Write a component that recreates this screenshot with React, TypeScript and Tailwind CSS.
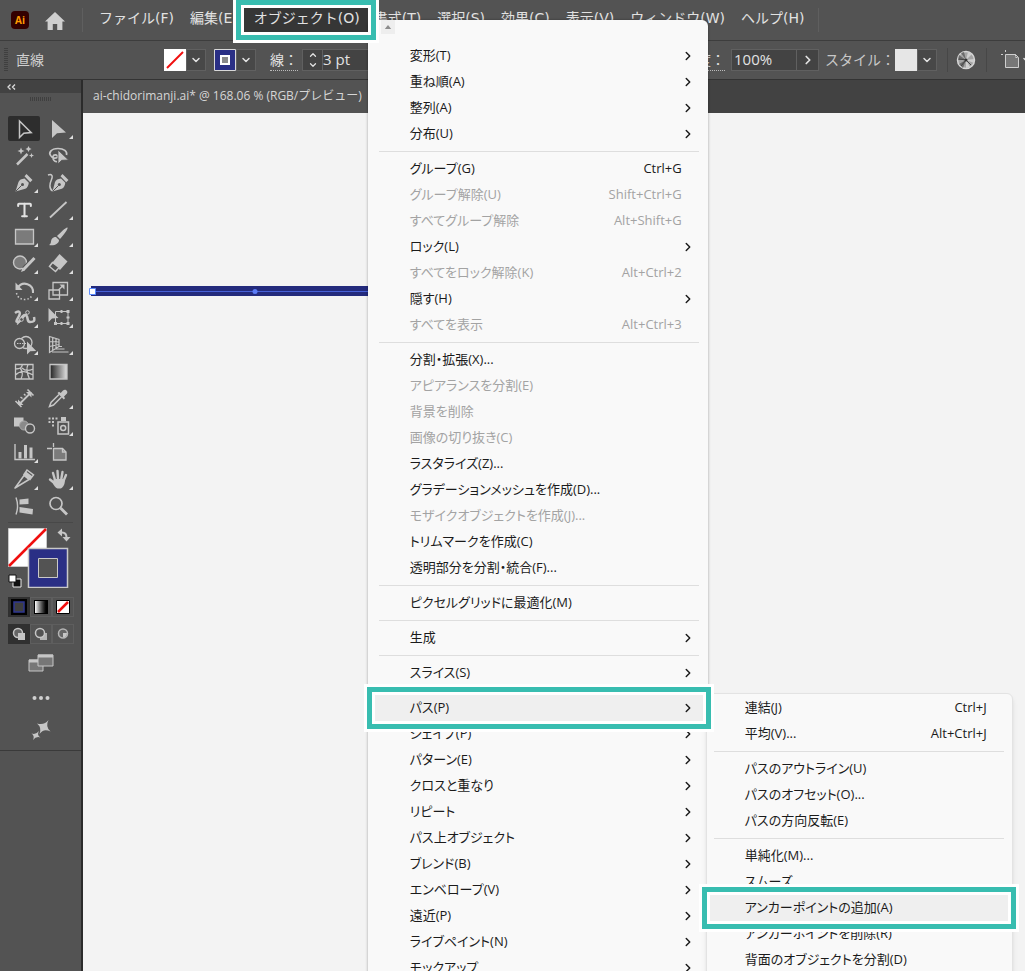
import { Fragment } from "react";
import type { ReactNode } from "react";
import { ChevronDown, ChevronRight, ChevronUp, Type } from "lucide-react";

type MenuEntry = {
  label: string;
  shortcut?: string;
  disabled?: boolean;
  more?: boolean;
  active?: boolean;
  children?: MenuEntry[][];
};

const pathMenu: MenuEntry[][] = [
  [
    { label: "連結(J)", shortcut: "Ctrl+J" },
    { label: "平均(V)...", shortcut: "Alt+Ctrl+J" },
  ],
  [
    { label: "パスのアウトライン(U)" },
    { label: "パスのオフセット(O)..." },
    { label: "パスの方向反転(E)" },
  ],
  [
    { label: "単純化(M)..." },
    { label: "スムーズ" },
    { label: "アンカーポイントの追加(A)", active: true },
    { label: "アンカーポイントを削除(R)" },
    { label: "背面のオブジェクトを分割(D)" },
  ],
];

const objectMenu: MenuEntry[][] = [
  [
    { label: "変形(T)", more: true },
    { label: "重ね順(A)", more: true },
    { label: "整列(A)", more: true },
    { label: "分布(U)", more: true },
  ],
  [
    { label: "グループ(G)", shortcut: "Ctrl+G" },
    { label: "グループ解除(U)", shortcut: "Shift+Ctrl+G", disabled: true },
    { label: "すべてグループ解除", shortcut: "Alt+Shift+G", disabled: true },
    { label: "ロック(L)", more: true },
    { label: "すべてをロック解除(K)", shortcut: "Alt+Ctrl+2", disabled: true },
    { label: "隠す(H)", more: true },
    { label: "すべてを表示", shortcut: "Alt+Ctrl+3", disabled: true },
  ],
  [
    { label: "分割・拡張(X)..." },
    { label: "アピアランスを分割(E)", disabled: true },
    { label: "背景を削除", disabled: true },
    { label: "画像の切り抜き(C)", disabled: true },
    { label: "ラスタライズ(Z)..." },
    { label: "グラデーションメッシュを作成(D)..." },
    { label: "モザイクオブジェクトを作成(J)...", disabled: true },
    { label: "トリムマークを作成(C)" },
    { label: "透明部分を分割・統合(F)..." },
  ],
  [{ label: "ピクセルグリッドに最適化(M)" }],
  [{ label: "生成", more: true }],
  [{ label: "スライス(S)", more: true }],
  [
    { label: "パス(P)", more: true, active: true, children: pathMenu },
    { label: "シェイプ(P)", more: true },
    { label: "パターン(E)", more: true },
    { label: "クロスと重なり", more: true },
    { label: "リピート", more: true },
    { label: "パス上オブジェクト", more: true },
    { label: "ブレンド(B)", more: true },
    { label: "エンベロープ(V)", more: true },
    { label: "遠近(P)", more: true },
    { label: "ライブペイント(N)", more: true },
    { label: "モックアップ", more: true },
  ],
];

function Highlight() {
  return (
    <span className="pointer-events-none absolute -inset-2 z-10 border-[5px] border-[#38bdb0] shadow-[0_0_0_3px_#fff,inset_0_0_0_3px_#fff]" />
  );
}

function MenuGroups({ groups }: { groups: MenuEntry[][] }) {
  return (
    <>
      {groups.map((group, i) => (
        <Fragment key={i}>
          {i > 0 && <hr className="mx-1 my-1 border-[#dedede]" />}
          {group.map((entry) => (
            <MenuRow key={entry.label} entry={entry} />
          ))}
        </Fragment>
      ))}
    </>
  );
}

function MenuRow({ entry }: { entry: MenuEntry }) {
  return (
    <div className={entry.active ? "relative z-10" : ""}>
      <button
        type="button"
        role="menuitem"
        disabled={entry.disabled}
        className={`flex h-[26px] w-full items-center pr-2 pl-[35px] text-left text-[13px] whitespace-nowrap ${entry.active ? "bg-[#efefef]" : ""} ${entry.disabled ? "text-[#a3a3a3]" : "text-[#1b1b1b]"}`}
      >
        <span className="flex-1 [font-feature-settings:'palt']">{entry.label}</span>
        {entry.shortcut && <span>{entry.shortcut}</span>}
        <span className="flex w-[13px] justify-center">
          {entry.more && <ChevronRight className="h-3.5 w-3.5 shrink-0" strokeWidth={2.5} />}
        </span>
      </button>
      {entry.children && (
        <div
          role="menu"
          className="absolute -top-0.5 left-[331px] w-[307px] rounded-md border border-[#e3e3e3] bg-[#f9f9f9] pt-px pr-1 pb-2 pl-[3px] shadow-md"
        >
          <MenuGroups groups={entry.children} />
        </div>
      )}
      {entry.active && <Highlight />}
    </div>
  );
}

function ObjectMenu() {
  return (
    <div
      role="menu"
      className="absolute top-3 left-full z-10 w-[340px] rounded-t-md bg-[#f9f9f9] pr-[5px] pb-2 pl-[7px] shadow-[0_0_3px_rgba(0,0,0,0.35)]"
    >
      <div className="mb-[9px] flex pl-1.5">
        <button type="button" aria-label="上へスクロール" className="flex h-3.5 w-3.5 items-center justify-center bg-[#eeeeee]">
          <svg viewBox="0 0 8 5" className="h-1 w-2 fill-[#8c8c8c]"><path d="M0 5 4 0l4 5z" /></svg>
        </button>
      </div>
      <MenuGroups groups={objectMenu} />
    </div>
  );
}

const menuNames = ["ファイル(F)", "編集(E)", "オブジェクト(O)", "書式(T)", "選択(S)", "効果(C)", "表示(V)", "ウィンドウ(W)", "ヘルプ(H)"];

function MenuBar() {
  return (
    <header className="relative z-20 flex items-start border-b border-[#3d3d3d] py-2">
      <div className="mt-[3px] ml-[11px] flex h-[18px] w-[18px] items-center justify-center rounded-[4px] bg-[#330000] text-[10px] font-bold text-[#ff9a00]">
        Ai
      </div>
      <button type="button" aria-label="ホーム" className="mt-1 ml-4">
        <svg viewBox="0 0 20 18" className="h-[18px] w-5 fill-[#cfcfcf]">
          <path d="M10 0 20 9.500h-2.600V18h-5.200v-6H7.800v6H2.600V9.500H0z" />
        </svg>
      </button>
      <span className="ml-[17px] h-6 w-px bg-[#5f5f5f]" />
      <nav className="ml-2 flex">
        {menuNames.map((name) =>
          name === "オブジェクト(O)" ? (
            <div key={name} className="relative z-10 -mx-0.5">
              <button type="button" className="block h-6 bg-[#363636] pr-2 pb-1 pl-2.5 font-['DejaVu_Sans','Noto_Sans_CJK_JP',sans-serif] text-sm leading-5 whitespace-nowrap">
                {name}
              </button>
              <ObjectMenu />
              <Highlight />
            </div>
          ) : (
            <button key={name} type="button" className="h-6 px-2 pb-1 font-['DejaVu_Sans','Noto_Sans_CJK_JP',sans-serif] text-sm leading-5 whitespace-nowrap">
              {name}
            </button>
          ),
        )}
      </nav>
      <span className="ml-1.5 h-6 w-px bg-[#5f5f5f]" />
    </header>
  );
}

function DropButton({ label }: { label: string }) {
  return (
    <button type="button" aria-label={label} className="flex h-[22px] w-5 items-center justify-center border border-[#606060] bg-[#484848]">
      <ChevronDown className="h-3 w-3" strokeWidth={3} />
    </button>
  );
}

function ControlBar() {
  return (
    <div className="flex h-[39px] items-center overflow-hidden border-b border-[#333] text-sm whitespace-nowrap">
      <span className="ml-1 h-6 w-1 shrink-0 bg-[repeating-linear-gradient(#3f3f3f_0_1px,transparent_1px_2px)]" />
      <span className="ml-2 w-[138px] shrink-0 text-[#d0d0d0]">直線</span>
      <div className="ml-2.5 flex shrink-0">
        <button type="button" aria-label="塗り">
          <svg viewBox="0 0 22 22" className="h-[22px] w-[22px]">
            <path d="M0 0h22v22H0z" fill="#fff" />
            <path d="M3 19 19 3" stroke="#f00f0f" strokeWidth="2" />
          </svg>
        </button>
        <DropButton label="塗りを選択" />
      </div>
      <div className="ml-2 flex shrink-0">
        <button type="button" aria-label="線のカラー">
          <svg viewBox="0 0 22 22" className="h-[22px] w-[22px]">
            <path d="M.5.5h21v21H.5z" fill="#2a2f85" stroke="#d8d8d8" />
            <path d="M7 7h8v8H7z" fill="#8a8a8a" stroke="#fff" strokeWidth="2" />
          </svg>
        </button>
        <DropButton label="線を選択" />
      </div>
      <label htmlFor="stroke-width" className="ml-3.5 shrink-0 border-b border-dotted border-[#bbb] leading-5">線：</label>
      <div className="ml-1 flex h-[22px] shrink-0 border border-[#606060] bg-[#434343]">
        <button type="button" aria-label="線幅を変更" className="flex w-5 flex-col items-center justify-center border-r border-[#606060]">
          <ChevronUp className="h-2.5 w-3" strokeWidth={3} />
          <ChevronDown className="h-2.5 w-3" strokeWidth={3} />
        </button>
        <input id="stroke-width" defaultValue="3 pt" className="w-16 bg-transparent text-[15px] outline-none" />
      </div>
      <div className="ml-auto flex shrink-0 items-center">
        <label htmlFor="opacity" className="border-b border-dotted border-[#bbb] leading-5">不透明度：</label>
        <div className="ml-1.5 flex h-[22px] border border-[#606060] bg-[#434343]">
          <input id="opacity" defaultValue="100%" className="w-16 bg-transparent pl-0.5 text-[15px] outline-none" />
          <button type="button" aria-label="不透明度を選択" className="flex w-[22px] items-center justify-center border-l border-[#606060]">
            <ChevronRight className="h-3.5 w-3.5" strokeWidth={3} />
          </button>
        </div>
        <span className="ml-1.5 text-[#c8c8c8]">スタイル：</span>
        <button type="button" aria-label="グラフィックスタイル" className="h-[22px] w-[22px] bg-[#e6e6e6]" />
        <DropButton label="スタイルを選択" />
        <span className="ml-2.5 h-6 w-px bg-[#474747]" />
        <button type="button" aria-label="オブジェクトを再配色" className="ml-2">
          <svg viewBox="0 0 20 20" className="h-5 w-5">
            <circle cx="10" cy="10" r="8.500" fill="#a5a5a5" stroke="#d6d6d6" strokeWidth="1.500" />
            <path d="M10 10 3 5l-1 5zM10 10 3 14l4 4zM10 10 8 2 5 3z" fill="#6b6b6b" />
            <path d="M10 10 12 2l4 2zM10 10l8-1v4zM10 10l0 8 4-1z" fill="#cfcfcf" />
            <path d="M10 10 5 16M10 10l5 5M10 10 3 9" stroke="#444" />
            <circle cx="10" cy="10" r="1.500" fill="#333" />
          </svg>
        </button>
        <span className="ml-2.5 h-6 w-px bg-[#474747]" />
        <button type="button" aria-label="アートボードに整列" className="ml-3.5 flex items-center">
          <svg viewBox="0 0 20 20" className="h-5 w-5" fill="none" stroke="#cfcfcf">
            <path d="M4.500 4.500h10l3 3v10h-13z" fill="#777" />
            <path d="M14.500 4.500v3h3M0 4.500h3M4.500 0v3" strokeDasharray="2 1" />
          </svg>
          <ChevronDown className="-mr-2 h-3 w-3" strokeWidth={3} />
        </button>
      </div>
    </div>
  );
}

type Tool = { name: string; flyout?: boolean; icon: ReactNode };

const tools: Tool[] = [
  { name: "選択", icon: <path d="M7.500 4v16.500l4.300-4.300 7.400-.6z" fill="none" strokeWidth="1.500" /> },
  { name: "ダイレクト選択", flyout: true, icon: <path d="M5 3v18l5-4.800 9-.7z" stroke="none" /> },
  {
    name: "自動選択",
    icon: (
      <>
        <path d="M5 20.500 15.500 10" strokeWidth="2.500" />
        <path stroke="none" d="M9 3.500 10 6l2.500 1L10 8l-1 2.500L8 8 5.500 7 8 6zM16.500 2l1 2 2 1-2 1-1 2-1-2-2-1 2-1zM19.500 9l.7 1.800L22 11.500l-1.800.7L19.500 14l-.7-1.800-1.800-.7 1.800-.7z" />
      </>
    ),
  },
  {
    name: "なげなわ",
    icon: (
      <>
        <path d="M4 12C1 9 4 4.500 11 4.500c6 0 9.500 3 8.500 6.500M4 12c1 2.500 6 3 6.500.500.300-2-4-2.500-4.500 0-.5 3 1.500 5.500 4 5" fill="none" strokeWidth="1.700" />
        <path d="M11 6v14l3.700-3.700 6.800-.3z" stroke="#535353" strokeWidth="0.800" />
      </>
    ),
  },
  {
    name: "ペン",
    flyout: true,
    icon: (
      <>
        <path stroke="none" d="M3.500 20.500 6.500 11c.7-2 3-3.200 6-3.500l4.300 4.300c-.3 3-1.500 5.200-3.500 6zM14.500 3l6 6-2.300 2.300L12.500 5.300z" />
        <path d="m4 20 5.500-5.500" stroke="#535353" />
        <circle cx="10.500" cy="13.500" r="1.500" fill="#535353" stroke="none" />
      </>
    ),
  },
  {
    name: "曲線",
    icon: (
      <>
        <path stroke="none" d="M5.500 20.500 8 11c.7-2 3-3.200 6-3.500l4.300 4.300c-.3 3-1.500 5.200-3.500 6zM15.500 3l6 6-2.300 2.300L13.500 5.300z" />
        <path d="m6 20 5.500-5.500" stroke="#535353" />
        <circle cx="12.300" cy="13.500" r="1.500" fill="#535353" stroke="none" />
        <path d="M1 4c4-1.500 5 1 3.500 4.500S1 17 5.500 20" fill="none" strokeWidth="1.500" />
      </>
    ),
  },
  { name: "文字", flyout: true, icon: <Type x={3} y={2.5} width={19} height={19} strokeWidth={2.6} fill="none" /> },
  { name: "直線", flyout: true, icon: <path d="M3 19.500 19.500 4" strokeWidth="1.800" /> },
  { name: "長方形", flyout: true, icon: <path d="M3.500 4.500h18v14.500h-18z" fill="#7b7b7b" strokeWidth="1.300" /> },
  {
    name: "ブラシ",
    flyout: true,
    icon: <path stroke="none" d="M20.500 2.500c1 1-4 8-7.500 11.500l-3-3c3.500-3.500 9.500-9.500 10.500-8.500zM9 12l3 3c0 4-5 6-10 5 2.500-1.500 1.500-3 2.500-5.500C5.500 12.500 7.500 12 9 12z" />,
  },
  {
    name: "Shaper",
    flyout: true,
    icon: (
      <>
        <circle cx="8" cy="10.500" r="6.500" fill="#7b7b7b" strokeWidth="1.400" />
        <path d="M22.500 6 12 17" stroke="#535353" strokeWidth="5" />
        <path d="M22.500 6 11.500 17.500" strokeWidth="3" />
        <path d="m9 20 1.500-4 2.500 2.500z" stroke="none" />
      </>
    ),
  },
  {
    name: "消しゴム",
    flyout: true,
    icon: (
      <>
        <path d="m12.500 2 8 7.500-7.500 8.500-8-7z" stroke="none" />
        <path d="m5.500 10.500-3 4 6 5 3.500-4z" fill="#535353" strokeWidth="1.500" />
      </>
    ),
  },
  {
    name: "回転",
    flyout: true,
    icon: (
      <>
        <path d="M5.500 9C8 5 12 4 15.500 5.200 19 6.500 21.500 9.500 21 14" fill="none" strokeWidth="2" />
        <path d="M3.500 3.500v7.500h7z" stroke="none" />
        <path d="M4.500 14c.8 4 4 6.500 8 6.500 3.500 0 6.500-1.500 8-5" fill="none" strokeWidth="1.500" strokeDasharray="1.500 2" />
      </>
    ),
  },
  {
    name: "拡大・縮小",
    flyout: true,
    icon: (
      <>
        <path d="M6 3.500h14.500v12.500H6z" fill="none" strokeWidth="1.300" />
        <path d="M2 11h10.500v9H2z" fill="none" strokeWidth="1.300" />
        <path d="m11.500 11 4-4" strokeWidth="1.500" />
        <path d="M17.500 5.500v5l-5-5z" stroke="none" />
      </>
    ),
  },
  {
    name: "線幅",
    flyout: true,
    icon: (
      <>
        <path d="M3 7c4-3 6-1 4 3s-4 6-1 6 3-7 7-7 1 7 5 7 5-1 4-5" fill="none" strokeWidth="2.500" />
        <path d="m5 18.500 10-11" fill="none" strokeWidth="1.200" />
        <circle cx="15.500" cy="6.500" r="1.800" fill="#535353" />
        <circle cx="9.500" cy="13.500" r="1.800" fill="#535353" />
      </>
    ),
  },
  {
    name: "自由変形",
    flyout: true,
    icon: (
      <>
        <path d="M8.500 5.500h12.500v12H8.500z" fill="none" />
        <path stroke="none" d="M19.500 4h3v3h-3zM19.500 16h3v3h-3zM7 16h3v3H7zM13.500 4h2v3h-2zM13.500 16h2v3h-2zM19.500 10.500h3v2h-3z" />
        <path d="M1.500 2v14l3.500-3.500 6.500-.5z" stroke="none" />
      </>
    ),
  },
  {
    name: "シェイプ形成",
    flyout: true,
    icon: (
      <>
        <circle cx="14" cy="9.500" r="6" fill="none" strokeWidth="1.300" />
        <circle cx="7.500" cy="10.500" r="5" fill="#535353" strokeWidth="1.300" />
        <path d="M5 10.500h10" strokeDasharray="1.500 1" />
        <path d="M15 8.500v13l3.200-3.200 6-.3z" stroke="none" />
      </>
    ),
  },
  {
    name: "遠近グリッド",
    flyout: true,
    icon: (
      <path d="M2.500 3.500v16L12 13.500v-7zM5.700 4.500v13M9 5.500v10M2.500 8.500l9.500.5M2.500 13.500l9.500-2M12 13.500h3M8.500 16h9M5 19h16.500" fill="none" strokeWidth="1.200" />
    ),
  },
  {
    name: "メッシュ",
    icon: (
      <path d="M3.500 4.500h17.500v14.500H3.500zM3.500 9c5 0 6-1 7-4.500M9 19c2-4 2-7-.5-10.500M16 4.500c-2 4-1 9 1.500 14.500M3.500 15c5-5 10-4 17.500 0M10 8c3 3 7 3 11 1" fill="none" strokeWidth="1.300" />
    ),
  },
  {
    name: "グラデーション",
    icon: (
      <>
        <defs>
          <linearGradient id="tool-gradient">
            <stop offset="0" stopColor="#222" />
            <stop offset="1" stopColor="#e0e0e0" />
          </linearGradient>
        </defs>
        <path d="M3 4.500h17v14.500H3z" fill="url(#tool-gradient)" strokeWidth="1.300" />
      </>
    ),
  },
  {
    name: "寸法",
    icon: (
      <>
        <path d="m8.500 16 9-9" strokeWidth="1.800" />
        <path d="m3.500 14 6 6M15.500 2.500l6 6" strokeWidth="1.600" />
        <path d="M6 12.500v5.500h5.500zM19.500 10.500V5H14z" stroke="none" />
        <path d="m8.500 10 2 1.500M12 7l1.500 1.500" strokeWidth="1.500" />
      </>
    ),
  },
  {
    name: "スポイト",
    flyout: true,
    icon: (
      <>
        <path d="M12 7.500 4 15.500l-1.500 4 4-1.500 8-8" fill="none" strokeWidth="1.500" />
        <path d="m10.500 6 1.500-1.200 1.700 1.200L16 3.500c2.500-2.500 6 1 3.500 3.500L17 9.500l1 1.700-1.200 1.300z" stroke="none" />
      </>
    ),
  },
  {
    name: "ブレンド",
    icon: (
      <>
        <path d="M2 3.500h9.500v9H2z" stroke="none" />
        <circle cx="12" cy="11.500" r="4.500" fill="#8a8a8a" stroke="#a9a9a9" />
        <circle cx="18" cy="14.500" r="4.500" fill="#535353" strokeWidth="1.400" />
      </>
    ),
  },
  {
    name: "シンボルスプレー",
    flyout: true,
    icon: (
      <>
        <path d="M11 8h10.500v12H11z" fill="none" strokeWidth="1.500" />
        <circle cx="16.200" cy="14" r="2.500" fill="none" strokeWidth="1.500" />
        <path stroke="none" d="M14 3h5v4h-5zM1.500 3.500h2v2h-2zM5 3.500h2v2H5zM8.500 3.500h2v2h-2zM1.500 7h2v2h-2zM5 7h2v2H5zM5 10.500h2v2H5z" />
      </>
    ),
  },
  {
    name: "棒グラフ",
    flyout: true,
    icon: (
      <>
        <path d="M3 3v15.500h20" fill="none" strokeWidth="1.400" />
        <path stroke="none" d="M6.500 11h3v6.500h-3zM12 4h3v13.500h-3zM17.500 6.500h3v11h-3z" />
      </>
    ),
  },
  {
    name: "アートボード",
    icon: (
      <>
        <path d="M6.500 7.500h9l3.500 3.500v8H6.500z" fill="#7b7b7b" strokeWidth="1.300" />
        <path d="M15.500 7.500v3.500H19M0 7.500h5M6.500 2v4" fill="none" strokeWidth="1.300" />
      </>
    ),
  },
  {
    name: "スライス",
    flyout: true,
    icon: (
      <>
        <path d="M3 20 12 7.500l5 4z" fill="none" strokeWidth="1.500" strokeLinejoin="round" />
        <path d="M12 6.500 15 2l6.500 5-3.500 4.500z" fill="none" strokeWidth="1.500" />
        <path d="m12 6.500 2-3 6.500 5-2.500 3z" stroke="none" />
      </>
    ),
  },
  {
    name: "手のひら",
    flyout: true,
    icon: (
      <>
        <path d="M8 12 6 5M11 11l-.5-8M14.300 11 15.500 4M16.500 13l2.500-6M8.500 16l-5.500-4.500" strokeWidth="2.400" strokeLinecap="round" />
        <path d="M7 11h10.500l.3 3c-.3 3-2.300 6-4.300 6.500h-3C8.500 20 6.500 17 5.500 14.500z" stroke="none" />
      </>
    ),
  },
  {
    name: "整列",
    icon: (
      <>
        <path d="M4 2.500c2 5.500 2 11.500 0 17" fill="none" strokeWidth="1.400" />
        <path d="m7.500 4.500 9-1v5.500l-9 .5zM7.500 12l13.500 2-.5 5.500-13-2z" stroke="none" />
      </>
    ),
  },
  {
    name: "ズーム",
    icon: (
      <>
        <circle cx="9" cy="8.500" r="6" fill="none" strokeWidth="1.700" />
        <path d="m13.500 13 6.500 6.500" strokeWidth="2.800" />
      </>
    ),
  },
];

function Toolbox() {
  return (
    <div className="grid grid-cols-[32px_32px] gap-x-[3px] gap-y-0.5">
      {tools.map((tool, i) => (
        <button
          key={tool.name}
          type="button"
          aria-label={`${tool.name}ツール`}
          className={`relative flex h-[25px] items-center justify-center rounded-xs ${i === 0 ? "bg-[#2d2d2d]" : ""}`}
        >
          <svg viewBox="0 0 24 24" className="h-6 w-6 shrink-0" fill="#c6c6c6" stroke="#c6c6c6">
            {tool.icon}
          </svg>
          {tool.flyout && (
            <svg viewBox="0 0 4 4" className="absolute right-0.5 bottom-0.5 h-1 w-1 fill-[#dedede]">
              <path d="M4 0v4H0z" />
            </svg>
          )}
        </button>
      ))}
    </div>
  );
}

function ColorControls() {
  return (
    <button type="button" aria-label="塗りと線" className="block">
      <svg viewBox="0 0 64 60" className="h-[60px] w-16" fill="none">
        <path d="M.5.5h38v38H.5z" fill="#fff" stroke="#c9c9c9" />
        <path d="M1 38 38 1" stroke="#f00f0f" strokeWidth="2.500" />
        <path d="M20.500 20.500h39v39h-39z" fill="#2a2f85" stroke="#c9c9c9" strokeWidth="1.500" />
        <path d="M30.500 30.500h19v19h-19z" fill="#535353" stroke="#c9c9c9" />
        <path d="M53 4.500h1c3 0 4.500 2 4.500 5" stroke="#c6c6c6" strokeWidth="2" />
        <path d="M54 .5v8l-4.500-4zM54.500 9H62.500l-4 4.500z" fill="#c6c6c6" />
        <path d="M5 51h8v8H5z" fill="#111" stroke="#eee" />
        <path d="M1 47h7v7H1z" fill="#fff" stroke="#111" />
      </svg>
    </button>
  );
}

function ColorModes() {
  return (
    <div className="mt-[9px] flex">
      <button type="button" aria-label="カラー" className="flex h-5 w-[22px] items-center justify-center bg-[#303030]">
        <svg viewBox="0 0 16 16" className="h-4 w-4">
          <path d="M0 0h16v16H0z" fill="#000" />
          <path d="M3 3h10v10H3z" fill="#3f3f3f" stroke="#2f3790" strokeWidth="1.500" />
        </svg>
      </button>
      <button type="button" aria-label="グラデーション" className="flex h-5 w-[22px] items-center justify-center border border-[#5e5e5e]">
        <span className="h-3.5 w-3.5 border border-black bg-linear-to-r from-white to-black" />
      </button>
      <button type="button" aria-label="なし" className="flex h-5 w-[22px] items-center justify-center border border-[#5e5e5e]">
        <svg viewBox="0 0 14 14" className="h-3.5 w-3.5">
          <path d="M.5.5h13v13H.5z" fill="#fff" stroke="#000" />
          <path d="M2 12 12 2" stroke="#f00f0f" strokeWidth="2.500" />
        </svg>
      </button>
    </div>
  );
}

function DrawModes() {
  return (
    <div className="mt-[7px] flex">
      <button type="button" aria-label="標準描画" className="flex h-5 w-[22px] items-center justify-center bg-[#303030]">
        <svg viewBox="0 0 14 14" className="h-3.5 w-3.5">
          <circle cx="6" cy="6" r="4.500" fill="#666" stroke="#c6c6c6" strokeWidth="1.500" />
          <path d="M6 6h7v7H6z" fill="#c6c6c6" />
        </svg>
      </button>
      <button type="button" aria-label="背面描画" className="flex h-5 w-[22px] items-center justify-center border border-[#5e5e5e]">
        <svg viewBox="0 0 14 14" className="h-3.5 w-3.5">
          <path d="M6 6h7v7H6z" fill="#b5b5b5" />
          <circle cx="6" cy="6" r="4.500" fill="#535353" stroke="#c6c6c6" strokeWidth="1.500" />
        </svg>
      </button>
      <button type="button" aria-label="内側描画" className="flex h-5 w-[22px] items-center justify-center border border-[#5e5e5e]">
        <svg viewBox="0 0 14 14" className="h-3.5 w-3.5">
          <circle cx="7" cy="6.500" r="4.500" fill="#666" stroke="#b5b5b5" strokeWidth="1.500" />
          <path d="M7 6h4c0 3-2 4.500-4 4.500z" fill="#c6c6c6" />
        </svg>
      </button>
    </div>
  );
}

function ToolPanel() {
  return (
    <aside className="w-[83px] shrink-0 border-r-2 border-[#2b2b2b]">
      <button type="button" aria-label="パネルを折りたたむ" className="flex h-[13px] w-full items-center bg-[#424242] pl-[7px]">
        <svg viewBox="0 0 9 6" className="h-1.5 w-[9px]" fill="none" stroke="#dcdcdc" strokeWidth="1.300">
          <path d="M3.500.5 1 3l2.500 2.500M8 .5 5.500 3 8 5.500" />
        </svg>
      </button>
      <div className="flex justify-center pt-1">
        <span className="h-1 w-[22px] bg-[repeating-linear-gradient(90deg,#3f3f3f_0_1px,transparent_1px_2px)]" />
      </div>
      <div className="pt-[15px] pl-2">
        <Toolbox />
        <hr className="mt-[3px] mr-2 mb-[5px] border-[#484848]" />
        <ColorControls />
        <ColorModes />
        <DrawModes />
      </div>
      <div className="flex flex-col items-center border-b border-[#3a3a3a] pt-2.5 pb-2.5">
        <button type="button" aria-label="スクリーンモード">
          <svg viewBox="0 0 26 18" className="h-[18px] w-[26px]" fill="#777" stroke="#c6c6c6">
            <path d="M1 6h14v11H1z" />
            <path d="M1 7h14" strokeWidth="3" />
            <path d="M10 1h15v11H10z" />
            <path d="M10 2h15" strokeWidth="3" />
          </svg>
        </button>
        <button type="button" aria-label="ツールバーを編集" className="mt-6">
          <svg viewBox="0 0 18 4" className="h-1 w-[18px] fill-[#d0d0d0]">
            <circle cx="2.500" cy="2" r="2" />
            <circle cx="9" cy="2" r="2" />
            <circle cx="15.500" cy="2" r="2" />
          </svg>
        </button>
        <button type="button" aria-label="生成" className="mt-5">
          <svg viewBox="0 0 20 20" className="h-5 w-5 fill-[#c6c6c6]">
            <path d="M17.500 0Q14 6.500 19.500 11.500 12.500 8 8.500 14 11 7.500 6 3.500 13.500 5.500 17.500 0z" />
            <path d="M8 11Q5.500 15 9.500 17.500 5 16 2 20 4 16 .5 13.500 5 15 8 11z" />
          </svg>
        </button>
      </div>
    </aside>
  );
}

function Document() {
  return (
    <main className="flex min-w-0 flex-1 flex-col bg-[#f3f3f3]">
      <div className="flex h-[33px] shrink-0 bg-[#424242]">
        <button type="button" className="w-[300px] bg-[#535353] pr-2 pb-0.5 pl-2.5 text-left text-xs whitespace-nowrap text-[#d6d6d6]">
          ai-chidorimanji.ai* @ 168.06 % (RGB/プレビュー)
        </button>
      </div>
      <div className="pt-[173px] pl-1.5">
        <svg viewBox="0 0 332 11" className="h-[11px] w-[332px]">
          <path d="M2 0h330v10H2z" fill="#232a7c" />
          <path d="M2 5.500h330" stroke="#4660d6" />
          <circle cx="166" cy="5.500" r="2.500" fill="#5b7cf5" />
          <path d="M.5 2.500h6v6h-6z" fill="#fff" stroke="#5b8cff" />
        </svg>
      </div>
    </main>
  );
}

export default function App() {
  return (
    <div className="flex h-screen flex-col overflow-hidden bg-[#535353] font-['Open_Sans','Noto_Sans_CJK_JP',sans-serif] text-[#e2e2e2]">
      <MenuBar />
      <ControlBar />
      <div className="flex min-h-0 flex-1">
        <ToolPanel />
        <Document />
      </div>
    </div>
  );
}
